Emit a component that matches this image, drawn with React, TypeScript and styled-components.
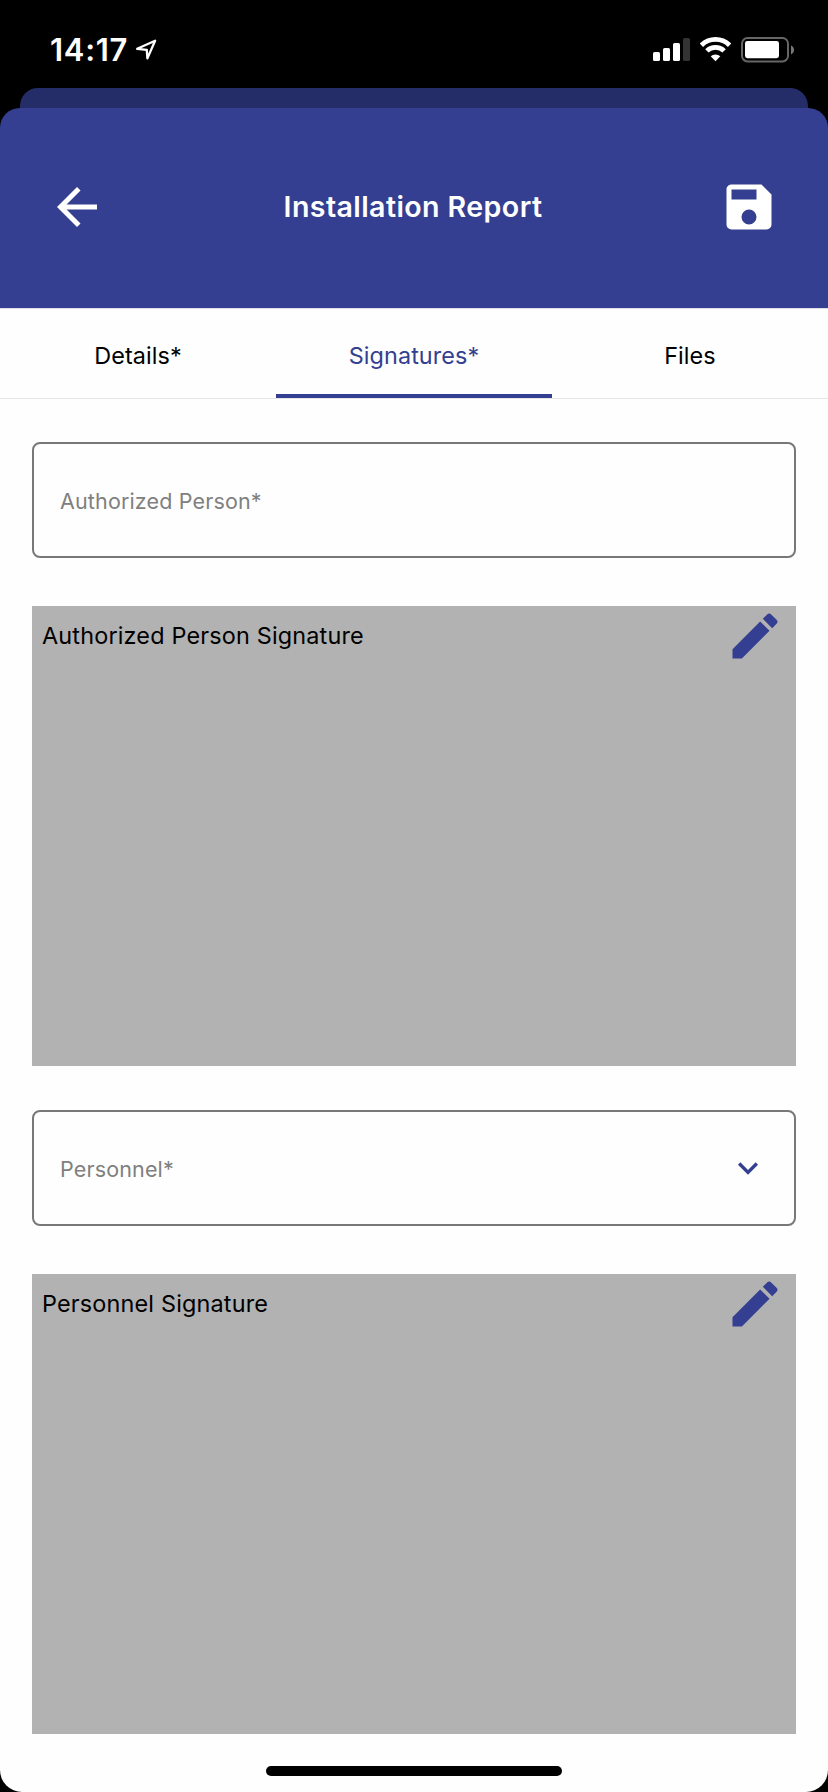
import React from "react";
import styled, { createGlobalStyle } from "styled-components";

const PRIMARY = "#343f91";

const GlobalStyle = createGlobalStyle`
  *, *::before, *::after { box-sizing: border-box; }
  body {
    margin: 0;
    background: #000;
    font-family: Inter, "Liberation Sans", sans-serif;
    color: #000;
  }
  svg { display: block; flex: none; }
`;

const Screen = styled.div`
  width: 828px;
  height: 1792px;
  display: flex;
  flex-direction: column;
  overflow: hidden;
  background: #000;
`;

const StatusBar = styled.div`
  height: 88px;
  flex: none;
  display: flex;
  align-items: flex-start;
  justify-content: space-between;
  padding: 30px 33px 0 50px;
`;

const ClockGroup = styled.div`
  display: flex;
  align-items: center;
  gap: 6px;
  height: 40px;
`;

const Clock = styled.span`
  width: 80px;
  color: #fff;
  font-size: 31px;
  font-weight: 600;
  line-height: 40px;
  letter-spacing: 0.7px;
  white-space: nowrap;
`;

const StatusIcons = styled.div`
  display: flex;
  align-items: center;
  gap: 10px;
  height: 40px;
`;

const BackSheet = styled.div`
  height: 20px;
  margin: 0 20px;
  flex: none;
  border-radius: 18px 18px 0 0;
  background: #252d68;
`;

const Header = styled.header`
  height: 200px;
  flex: none;
  display: flex;
  align-items: center;
  justify-content: space-between;
  padding: 0 49px 2px 47px;
  border-radius: 20px 20px 0 0;
  background: ${PRIMARY};
`;

const IconButton = styled.button<{ $color: string }>`
  display: flex;
  padding: 0;
  border: 0;
  background: none;
  color: ${(p) => p.$color};
`;

const Title = styled.h1`
  margin: 0;
  color: #fff;
  font-size: 28.6px;
  font-weight: 600;
  line-height: 36px;
  letter-spacing: 0.4px;
  white-space: nowrap;
`;

const Body = styled.main`
  flex: 1;
  display: flex;
  flex-direction: column;
  border-radius: 0 0 22px 22px;
  background: #fefefe;
`;

const Tabs = styled.nav`
  height: 91px;
  flex: none;
  display: grid;
  grid-template-columns: repeat(3, 1fr);
  border-top: 1px solid #dcdde6;
  border-bottom: 1px solid #e6e6e6;
`;

const Tab = styled.div<{ $active?: boolean }>`
  display: flex;
  align-items: center;
  justify-content: center;
  padding-top: ${(p) => (p.$active ? 8 : 4)}px;
  border-bottom: ${(p) => (p.$active ? `4px solid ${PRIMARY}` : "0")};
  color: ${(p) => (p.$active ? PRIMARY : "#000")};
  font-size: 23.4px;
  line-height: 30px;
  letter-spacing: 0.08px;
`;

const Form = styled.div`
  display: flex;
  flex-direction: column;
  gap: 44px;
  padding: 43px 32px 0;
`;

const FormGroup = styled.div`
  display: flex;
  flex-direction: column;
  gap: 48px;
`;

const Field = styled.div`
  height: 116px;
  display: flex;
  align-items: center;
  justify-content: space-between;
  padding: 0 26px;
  border: 2px solid #787878;
  border-radius: 8px;
  color: #808080;
`;

const FieldLabel = styled.span`
  padding-top: 2px;
  font-size: 21.5px;
  line-height: 28px;
  letter-spacing: 0.15px;
`;

const SignaturePad = styled.section`
  height: 460px;
  display: flex;
  align-items: flex-start;
  justify-content: space-between;
  padding: 0 11px 0 10px;
  background: #b2b2b2;
`;

const PadLabel = styled.span`
  font-size: 23.4px;
  line-height: 60px;
  letter-spacing: 0.18px;
`;

const HomeIndicator = styled.div`
  width: 296px;
  height: 10px;
  margin: auto auto 16px;
  flex: none;
  border-radius: 5px;
  background: #000;
`;

const ICONS = {
  back: "M20 11H7.83l5.59-5.59L12 4l-8 8 8 8 1.41-1.41L7.83 13H20v-2z",
  save: "M15,9H5V5H15M12,19A3,3 0 0,1 9,16A3,3 0 0,1 12,13A3,3 0 0,1 15,16A3,3 0 0,1 12,19M17,3H5C3.89,3 3,3.9 3,5V19A2,2 0 0,0 5,21H19A2,2 0 0,0 21,19V7L17,3Z",
  pencil:
    "M20.71,7.04C21.1,6.65 21.1,6 20.71,5.63L18.37,3.29C18,2.9 17.35,2.9 16.96,3.29L15.12,5.12L18.87,8.87M3,17.25V21H6.75L17.81,9.93L14.06,6.18L3,17.25Z",
  chevron: "M7.41,8.58L12,13.17L16.59,8.58L18,10L12,16L6,10L7.41,8.58Z",
};

function Icon({ name, size }: { name: keyof typeof ICONS; size: number }) {
  return (
    <svg width={size} height={size} viewBox="0 0 24 24" fill="currentColor" aria-hidden="true">
      <path d={ICONS[name]} />
    </svg>
  );
}

function LocationArrow() {
  return (
    <svg width="22" height="22" viewBox="0 0 22 22" fill="none" stroke="#fff" strokeWidth="2.3" strokeLinejoin="round">
      <path d="M1.2 9.8 19.1 1.8 11.4 19.4 10.8 10.9z" />
    </svg>
  );
}

function Signal() {
  return (
    <svg width="37" height="26" viewBox="0 0 37 26" fill="#fff">
      <rect x="0" y="15" width="7" height="9" rx="1.6" />
      <rect x="10" y="11" width="7" height="13" rx="1.6" />
      <rect x="20" y="6" width="7" height="18" rx="1.6" />
      <rect x="30" y="1" width="7" height="23" rx="1.6" fill="#333" />
    </svg>
  );
}

function Wifi() {
  return (
    <svg width="31" height="26" viewBox="0 0 31 26">
      <g fill="none" stroke="#fff" strokeWidth="4.8">
        <path d="M1.4 8.2a20.2 20.2 0 0 1 28.2 0" />
        <path d="M6.9 13.9a12.3 12.3 0 0 1 17.2 0" />
      </g>
      <path d="M15.5 24.2l-4.8-4.9a7 7 0 0 1 9.6 0z" fill="#fff" />
    </svg>
  );
}

function Battery() {
  return (
    <svg width="54" height="26" viewBox="0 0 54 26">
      <rect x="1" y="1" width="46" height="23.4" rx="5.5" fill="none" stroke="#666" strokeWidth="2" />
      <rect x="4" y="4" width="34" height="17.2" rx="2.4" fill="#fff" />
      <path d="M50 8.6c4 1.4 4 7.4 0 8.8z" fill="#777" />
    </svg>
  );
}

function Signature({ label }: { label: string }) {
  return (
    <SignaturePad>
      <PadLabel>{label}</PadLabel>
      <IconButton $color={PRIMARY} aria-label="Edit">
        <Icon name="pencil" size={60} />
      </IconButton>
    </SignaturePad>
  );
}

export default function App() {
  return (
    <Screen>
      <GlobalStyle />
      <StatusBar>
        <ClockGroup>
          <Clock>14:17</Clock>
          <LocationArrow />
        </ClockGroup>
        <StatusIcons>
          <Signal />
          <Wifi />
          <Battery />
        </StatusIcons>
      </StatusBar>
      <BackSheet />
      <Header>
        <IconButton $color="#fff" aria-label="Back">
          <Icon name="back" size={60} />
        </IconButton>
        <Title>Installation Report</Title>
        <IconButton $color="#fff" aria-label="Save">
          <Icon name="save" size={60} />
        </IconButton>
      </Header>
      <Body>
        <Tabs>
          <Tab>Details*</Tab>
          <Tab $active>Signatures*</Tab>
          <Tab>Files</Tab>
        </Tabs>
        <Form>
          <FormGroup>
            <Field>
              <FieldLabel>Authorized Person*</FieldLabel>
            </Field>
            <Signature label="Authorized Person Signature" />
          </FormGroup>
          <FormGroup>
            <Field>
              <FieldLabel>Personnel*</FieldLabel>
              <IconButton $color={PRIMARY} aria-label="Open list">
                <Icon name="chevron" size={40} />
              </IconButton>
            </Field>
            <Signature label="Personnel Signature" />
          </FormGroup>
        </Form>
        <HomeIndicator />
      </Body>
    </Screen>
  );
}
